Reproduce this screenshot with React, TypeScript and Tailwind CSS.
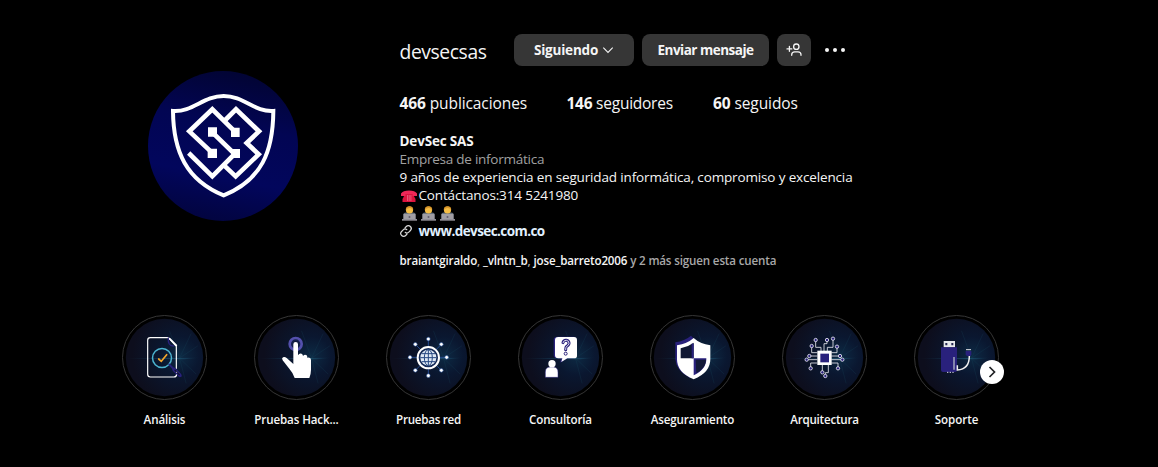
import React from "react";

type IconProps = { id: string; x: number; children: React.ReactNode };

function HighlightArt({ id, x, children }: IconProps) {
  const cx = x + 127.5;
  return (
    <svg className="block size-[85px]" viewBox={`${x} 30 255 255`}>
      <defs>
        <radialGradient id={`${id}-g`} cx="0.7" cy="0.48" r="0.62">
          <stop offset="0" stopColor="#0d2a44" />
          <stop offset="0.4" stopColor="#0a1730" />
          <stop offset="1" stopColor="#0d0e1d" />
        </radialGradient>
        <linearGradient id={`${id}-s`}>
          <stop offset="0" stopColor="#1d5570" stopOpacity="0.25" />
          <stop offset="0.7" stopColor="#226080" stopOpacity="0.6" />
          <stop offset="1" stopColor="#1d5570" stopOpacity="0" />
        </linearGradient>
      </defs>
      <circle cx={cx} cy="157.5" r="126" fill="none" stroke="#363636" strokeWidth="3" />
      <circle cx={cx} cy="157.5" r="116" fill={`url(#${id}-g)`} />
      <g transform={`translate(${cx} 157.5)`}>
        <path d="M-112 3L105 1L60 5Z" fill={`url(#${id}-s)`} />
        <path d="M45 2L80 -72M45 2L100 -35M45 2L15 -80M45 2L95 50M45 2L65 78" stroke="#1d5366" strokeWidth="2" opacity="0.28" />
      </g>
      {children}
    </svg>
  );
}

const nodes = [
  [145, 102], [184, 118], [200, 157], [184, 196], [145, 212], [106, 196], [90, 157], [106, 118],
];

const pins = [
  [527, 105], [515, 123], [561, 105], [579, 101], [591, 125], [508, 153], [500, 164],
  [600, 153], [607, 164], [512, 190], [594, 190], [547, 202], [556, 213],
];

const highlights = [
  {
    label: "Análisis", tracking: "tracking-[-0.12px]", x: 21,
    art: (
      <g fill="none" strokeWidth="3.5" strokeLinejoin="round" strokeLinecap="round">
        <path d="M184 190V124L160 98H106Q98 98 98 106V208Q98 216 106 216H177Q184 216 185 208" stroke="#fff" />
        <path d="M160 99Q158 123 175 123" stroke="#29217c" strokeWidth="4" />
        <path d="M164 101L184 121" stroke="#fff" strokeWidth="5" />
        <circle cx="141" cy="159" r="28.5" stroke="#4cb4d0" strokeWidth="4.5" />
        <path d="M163 179L197 213" stroke="#29217c" strokeWidth="6" />
        <path d="M177 193L194 210" stroke="#29217c" strokeWidth="11" />
        <path d="M180 196L193 209" stroke="#101633" strokeWidth="4" />
        <circle cx="185" cy="202" r="1.5" fill="#fff" stroke="none" />
        <path d="M131 162L139 169L155 149" stroke="#f4a62a" strokeWidth="5" />
      </g>
    ),
  },
  {
    label: "Pruebas Hack...", tracking: "tracking-[-0.12px]", x: 417,
    art: (
      <g>
        <circle cx="542" cy="117" r="18" fill="#15204b" stroke="#5450ad" strokeWidth="8" />
        <circle cx="542" cy="117" r="9" fill="#10193e" />
        <path d="M535 177V118Q535 111 542 111Q549 111 549 118V151Q553 143 560 146Q564 148 564 153Q569 147 575 151Q577 154 577 158Q588 155 588 165V194Q588 206 583 219H539Q534 204 524 193L503 166Q499 160 504 157Q509 154 515 159Z" fill="#fff" />
      </g>
    ),
  },
  {
    label: "Pruebas red", tracking: "tracking-[-0.25px]", x: 18,
    art: (
      <g>
        <path d="M145 102V212M90 157H200M106 118L184 196M184 118L106 196" stroke="#2a54a0" strokeWidth="2.5" />
        {nodes.map(([x, y]) => (
          <circle key={`${x}-${y}`} cx={x} cy={y} r="5.5" fill="#fff" stroke="#2552a0" strokeWidth="1.5" />
        ))}
        <circle cx="145" cy="158" r="32" fill="#132956" stroke="#fff" strokeWidth="6" />
        <circle cx="145" cy="158" r="24" fill="#dfe9f5" />
        <g fill="none" stroke="#254781" strokeWidth="3">
          <ellipse cx="145" cy="158" rx="12" ry="24" />
          <path d="M145 134V182M121 158H169M125 146H165M125 170H165" />
        </g>
      </g>
    ),
  },
  {
    label: "Consultoría", tracking: "tracking-[-0.17px]", x: 414,
    art: (
      <g>
        <path d="M533 95H580Q589 95 589 104V151Q589 160 580 160H563L541 173L543 160H533Q521 160 521 150V104Q521 95 533 95Z" fill="#29217c" />
        <path d="M535 96H582Q591 96 591 105V152Q591 160 582 160H562L544 171L547 160H535Q525 160 525 151V105Q525 96 535 96Z" fill="#fff" />
        <path d="M549 113Q551 105 559 106Q568 107 567 116Q566 121 560 124Q557 126 557 134" fill="none" stroke="#29217c" strokeWidth="9" strokeLinecap="round" />
        <path d="M549 113Q551 105 559 106Q568 107 567 116Q566 121 560 124Q557 126 557 134" fill="none" stroke="#fff" strokeWidth="2.5" strokeLinecap="round" />
        <circle cx="557" cy="146" r="4.5" fill="#fff" stroke="#29217c" strokeWidth="3" />
        <path d="M496 217V201Q496 186 511 186H521Q534 187 534 202V217Z" fill="#fff" stroke="#29217c" strokeWidth="1.5" />
        <circle cx="516" cy="176" r="11" fill="#fff" />
      </g>
    ),
  },
  {
    label: "Aseguramiento", tracking: "tracking-[-0.17px]", x: 30,
    art: (
      <g>
        <path d="M153 92Q134 108 106 112V162Q108 197 150 219L165 104Z" fill="#29217c" />
        <path d="M161 99Q181 117 211 121V163Q211 203 161 223Q111 203 111 163V121Q142 116 161 99Z" fill="#fff" />
        <path d="M161 113V160H122V130Q145 125 161 113Z" fill="#101733" />
        <path d="M158 116V160" stroke="#29217c" strokeWidth="6" />
        <path d="M161 160H199Q200 193 161 211Z" fill="#29217c" />
        <path d="M167 164H198Q197 190 169 204Z" fill="#131a38" />
      </g>
    ),
  },
  {
    label: "Arquitectura", tracking: "tracking-[-0.22px]", x: 426,
    art: (
      <g>
        <path d="M527 105V127H543V140M515 123V143H532M561 105V116H552V140M579 101V127H562V140M591 125V143H574M508 153H532M500 164H532M574 153H600M574 164H607M512 190V174H532M594 190V174H574M547 202V178M556 213V203M565 178V203H556" fill="none" stroke="#e8e9ef" strokeWidth="2.5" />
        {pins.map(([x, y]) => (
          <circle key={`${x}-${y}`} cx={x} cy={y} r="5" fill="#29217c" stroke="#e9e9f3" strokeWidth="2.5" />
        ))}
        <path d="M532 137H575V180H532Z" fill="#fff" />
        <path d="M541 146H567V172H541Z" fill="#29217c" />
      </g>
    ),
  },
  {
    label: "Soporte", tracking: "tracking-[-0.05px]", x: 42,
    art: (
      <g>
        <path d="M131 108H165V127H131Z" fill="#e6e8ec" />
        <path d="M136 114H142V121H136ZM154 114H160V121H154Z" fill="#222550" />
        <path d="M123 127H171V195Q171 201 165 201H129Q123 201 123 195Z" fill="#29217c" />
        <path d="M162 156V194" stroke="#9698b8" strokeWidth="5" />
        <path d="M172 181V195Q208 193 208 153" fill="none" stroke="#f0f0f0" strokeWidth="4.5" />
        <path d="M197 138H214V149L211 153H201L197 149Z" fill="#29217c" />
        <path d="M198 134H213" stroke="#dfe1e6" strokeWidth="3" />
        <path d="M141 202H162" stroke="#d9d9e8" strokeWidth="3" strokeDasharray="4 4" />
      </g>
    ),
  },
];

function Avatar() {
  return (
    <svg className="block size-[150px]" viewBox="24 18 450 450">
      <defs>
        <linearGradient id="avatar" x1="0.6" y1="0" x2="0.4" y2="1">
          <stop offset="0" stopColor="#020433" />
          <stop offset="0.35" stopColor="#020553" />
          <stop offset="0.7" stopColor="#02065c" />
          <stop offset="1" stopColor="#02043f" />
        </linearGradient>
      </defs>
      <circle cx="249" cy="243" r="225" fill="url(#avatar)" />
      <g fill="none" stroke="#fff" strokeWidth="14" strokeLinejoin="miter">
        <path d="M99 138C158 142 190 93 251 93S343 142 400 138C399 260 365 345 251 391C139 345 100 260 99 138Z" strokeWidth="12" />
        <path d="M216 263L148 199L217 133L287 202" />
        <path d="M253 168L288 133L357 199L320 234L356 268L287 334L253 302" />
        <path d="M217 202L284 267L217 334L146 264" />
      </g>
      <path d="M204 187H231V215H204ZM273 188H299V216H273ZM203 251H231V279H203ZM274 252H300V279H274Z" fill="#fff" />
    </svg>
  );
}

function Technologist() {
  return (
    <svg className="block h-[15px] w-[19px]" viewBox="0 0 19 15">
      <path d="M3.4 13V9Q3.4 6.6 6 6.6H13Q15.6 6.6 15.6 9V13Z" fill="#66717d" />
      <circle cx="9.5" cy="4" r="3.6" fill="#f5bd45" />
      <path d="M5.8 4Q5.6 .3 9.5 .3T13.2 4Q11.5 1.8 9.5 2T5.8 4Z" fill="#d8962a" />
      <path d="M3.5 8H15.5V14H3.5Z" fill="#a09da3" />
      <path d="M2 13H17V14.7H2Z" fill="#918e96" />
      <circle cx="9.5" cy="11" r="1" fill="#615d6b" />
    </svg>
  );
}

export default function App() {
  return (
    <main className="h-[467px] w-[1158px] overflow-hidden bg-black font-['Open_Sans','Noto_Sans',sans-serif] text-[#f5f5f5]">
      <header className="flex h-[315px]">
        <div className="w-[399.5px] pt-[71px] pl-[148px]">
          <Avatar />
        </div>
        <section className="pt-[34px]">
          <div className="flex h-8 items-center">
            <h1 className="w-[114.5px] pt-[3px] text-[19.3px] leading-6 tracking-[-0.4px] whitespace-nowrap">devsecsas</h1>
            <button className="flex h-8 w-[120px] items-center justify-center gap-1 rounded-lg bg-[#363636] text-[13.5px] font-[680] tracking-[-0.2px]">
              Siguiendo
              <svg className="size-3" viewBox="0 0 12 12"><path d="M1.3 3.7L6 8.4L10.7 3.7" fill="none" stroke="currentColor" strokeWidth="1.1" /></svg>
            </button>
            <button className="ml-2 h-8 w-[127px] rounded-lg bg-[#363636] text-[13.5px] font-[680] tracking-[-0.5px] whitespace-nowrap">Enviar mensaje</button>
            <button className="ml-2 flex h-8 w-[34px] items-center justify-center rounded-lg bg-[#363636]">
              <svg className="size-4" viewBox="0 0 16 16" fill="none" stroke="currentColor" strokeWidth="1.3" strokeLinecap="round">
                <circle cx="10.3" cy="4.7" r="2.7" />
                <path d="M5.7 13.3V12.8Q5.7 9.8 8.7 9.8H12Q15 9.8 15 12.8V13.3M3.4 4.5V9.3M1 6.9H5.8" />
              </svg>
            </button>
            <svg className="ml-3.5 h-5 w-5" viewBox="0 0 20 20" fill="currentColor"><circle cx="2" cy="10" r="2" /><circle cx="10" cy="10" r="2" /><circle cx="18" cy="10" r="2" /></svg>
          </div>
          <div className="mt-[26px] flex h-6 items-center text-[15.5px] whitespace-nowrap">
            <span className="w-[167px] tracking-[-0.1px]"><b className="font-[680]">466</b> publicaciones</span>
            <span className="w-[146.5px] tracking-[-0.25px]"><b className="font-[680]">146</b> seguidores</span>
            <span className="tracking-[-0.1px]"><b className="font-[680]">60</b> seguidos</span>
          </div>
          <div className="mt-4 text-[13.5px] leading-[18px] whitespace-nowrap">
            <p className="font-[680] tracking-[-0.17px]">DevSec SAS</p>
            <p className="tracking-[-0.25px] text-[#a0a0a0]">Empresa de informática</p>
            <p className="tracking-[-0.15px]">9 años de experiencia en seguridad informática, compromiso y excelencia</p>
            <p className="flex items-center tracking-[-0.15px]">
              <svg className="mt-0.5 mr-px h-[14px] w-[18px]" viewBox="0 0 18 14">
                <path d="M2.5 13V10L5.5 4.5H12.5L15.5 10V13Z" fill="#dc143f" />
                <path d="M1 7V4.5Q3 1.5 9 1.5T17 4.5V7H12.5V5H5.5V7Z" fill="#ef2858" />
                <path d="M7 7H11.5M7 9H11.5M7 11H11.5" stroke="#f59ab0" strokeDasharray="1 .7" />
              </svg>
              Contáctanos:314 5241980
            </p>
            <div className="flex h-[18px] items-center"><Technologist /><Technologist /><Technologist /></div>
            <p className="flex items-center font-[680] tracking-[-0.58px] text-[#e0f1ff]">
              <svg className="mr-[7px] size-3" viewBox="0 0 12 12" fill="none" stroke="#d9d9d9" strokeWidth="1.2" strokeLinecap="round">
                <path d="M5 2.8L6.3 1.5A2.7 2.7 0 0 1 10.4 5.5L8.8 7.1A2.7 2.7 0 0 1 5.2 7.3M7 9.2L5.7 10.5A2.7 2.7 0 0 1 1.6 6.5L3.2 4.9A2.7 2.7 0 0 1 6.8 4.7" />
              </svg>
              www.devsec.com.co
            </p>
          </div>
          <p className="mt-[13px] text-[11.6px] leading-4 font-[620] tracking-[-0.155px] whitespace-nowrap text-[#a8a8a8]">
            <span className="text-[#f5f5f5]">braiantgiraldo</span>, <span className="text-[#f5f5f5]">_vlntn_b</span>, <span className="text-[#f5f5f5]">jose_barreto2006</span> y 2 más siguen esta cuenta
          </p>
        </section>
      </header>
      <section className="relative flex gap-[47px] pl-[122px]">
        {highlights.map((h, i) => (
          <div key={h.label} className="flex w-[85px] shrink-0 flex-col items-center">
            <HighlightArt id={`h${i}`} x={h.x}>{h.art}</HighlightArt>
            <p className={`mt-3 text-[11.6px] leading-4 font-[650] whitespace-nowrap ${h.tracking}`}>{h.label}</p>
          </div>
        ))}
        <button className="absolute top-[45px] left-[980px] flex size-6 items-center justify-center rounded-full bg-white">
          <svg className="size-3" viewBox="0 0 12 12"><path d="M3.5 1L8.5 6L3.5 11" fill="none" stroke="#202124" strokeWidth="1.7" /></svg>
        </button>
      </section>
    </main>
  );
}
